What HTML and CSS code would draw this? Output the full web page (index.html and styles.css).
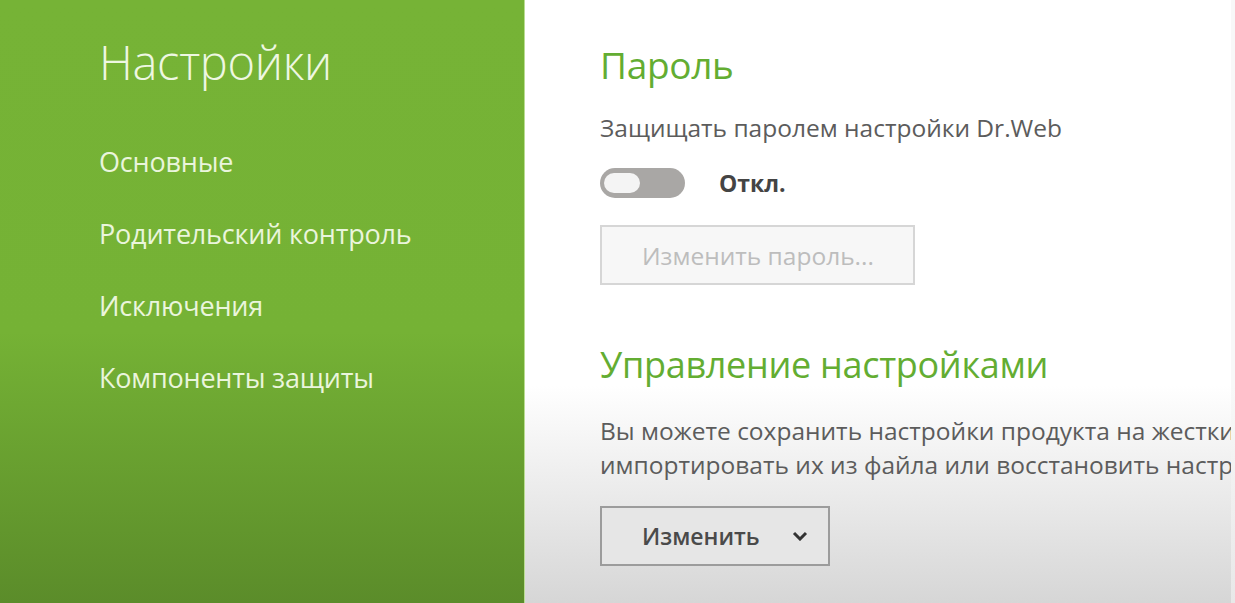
FILE: index.html
```html
<!DOCTYPE html>
<html>
  <head>
    <title>Настройки</title>
    <link rel="stylesheet" href="styles.css">
  </head>

  <body>
    <div id="window">
      <aside id="sidebar">
        <h1 class="title">Настройки</h1>
        <nav class="menu">
          <a class="menu-item">Основные</a>
          <a class="menu-item">Родительский контроль</a>
          <a class="menu-item">Исключения</a>
          <a class="menu-item">Компоненты защиты</a>
        </nav>
      </aside>

      <main id="content">
        <section class="section">
          <h2 class="section-title">Пароль</h2>
          <p class="text">Защищать паролем настройки Dr.Web</p>
          <div class="switch-row">
            <span class="switch"><span class="switch-knob"></span></span>
            <span class="switch-label">Откл.</span>
          </div>
          <button class="btn btn-disabled" type="button" disabled>Изменить пароль...</button>
        </section>

        <section class="section section-manage">
          <h2 class="section-title">Управление настройками</h2>
          <p class="text text-wide">Вы можете сохранить настройки продукта на жесткий диск или<br>импортировать их из файла или восстановить настройки по умолчанию.</p>
          <button class="btn btn-dropdown" type="button">
            Изменить
            <svg class="chevron" width="16" height="10" viewBox="0 0 16 10">
              <path d="M2 2 L8 8 L14 2" fill="none" stroke="#333" stroke-width="3"/>
            </svg>
          </button>
        </section>
      </main>

      <div id="edge"></div>
    </div>
  </body>
</html>
```

FILE: styles.css
```css
* {
  box-sizing: border-box;
}

html,
body {
  margin: 0;
  height: 100%;
}

body {
  font-family: 'Open Sans', 'Noto Sans', sans-serif;
  color: #555;
  overflow: hidden;
}

#window {
  display: flex;
  height: 603px;
}

/* left green panel */
#sidebar {
  width: 525px;
  flex-shrink: 0;
  padding: 30px 0 0 99px;
  background: linear-gradient(to bottom, #76b336 0%, #75b235 55%, #5b8c2a 100%);
  border-right: 1px solid #b9dd92;
}

.title {
  margin: 0 0 50px;
  font-size: 47px;
  font-weight: 300;
  line-height: 64px;
  color: #eef7e2;
  letter-spacing: -0.3px;
}

.menu {
  display: flex;
  flex-direction: column;
  gap: 36px;
}

.menu-item {
  font-size: 27px;
  line-height: 36px;
  color: #eaf5dc;
  letter-spacing: -0.2px;
}

/* right content */
#content {
  flex: 1;
  overflow: hidden;
  white-space: nowrap;
  padding: 40px 0 0 75px;
  background: linear-gradient(to bottom, #ffffff 0%, #ffffff 64%, #d6d6d6 100%);
}

#edge {
  width: 4px;
  flex-shrink: 0;
  background: linear-gradient(to bottom, #f8f8f8 0%, #f8f8f8 64%, #e8e8e8 100%);
}

.section-title {
  margin: 0;
  font-size: 37px;
  font-weight: 400;
  line-height: 50px;
  color: #63ad32;
  letter-spacing: -0.3px;
}

.section-manage .section-title {
  font-size: 36px;
}

.text {
  margin: 21px 0 0;
  font-size: 24.5px;
  line-height: 34px;
  color: #5c5c5c;
}

.switch-row {
  display: flex;
  align-items: center;
  gap: 34px;
  margin-top: 23px;
}

.switch {
  display: flex;
  align-items: center;
  width: 85px;
  height: 30px;
  padding: 0 4px;
  border-radius: 15px;
  background: #a9a7a5;
}

.switch-knob {
  width: 36px;
  height: 20px;
  border-radius: 10px;
  background: #f4f4f4;
}

.switch-label {
  font-size: 23px;
  font-weight: 700;
  line-height: 30px;
  color: #444;
}

.btn {
  display: flex;
  align-items: center;
  font-family: 'Open Sans', 'Noto Sans', sans-serif;
  padding: 0 0 0 40px;
  margin-top: 27px;
}

.btn-disabled {
  width: 315px;
  height: 60px;
  border: 2px solid #d6d6d6;
  background: #f7f7f7;
  color: #bdbdbd;
  font-size: 24.5px;
  font-weight: 400;
}

.section-manage {
  margin-top: 55px;
}

.section-manage .text {
  margin-top: 24px;
}

.btn-dropdown {
  width: 230px;
  height: 60px;
  margin-top: 24px;
  border: 2px solid #9c9c9c;
  background: #e6e6e6;
  color: #4a4a4a;
  font-size: 23px;
  font-weight: 600;
  gap: 32px;
}

.chevron {
  display: block;
}
```
